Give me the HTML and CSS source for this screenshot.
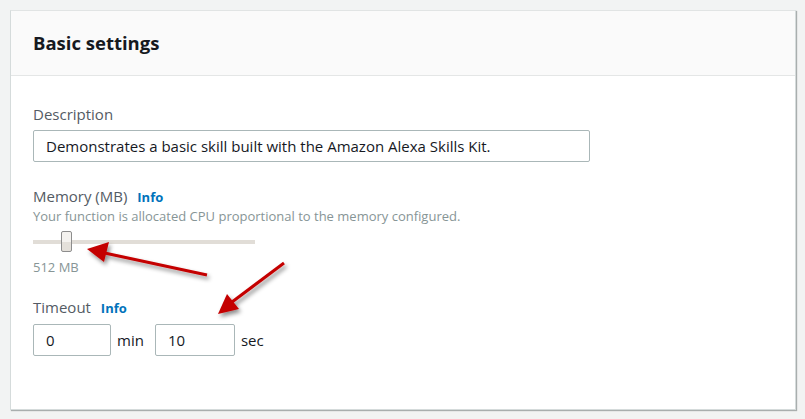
FILE: index.html
```html
<!DOCTYPE html>
<html>
<head>
<meta charset="utf-8">
<link rel="stylesheet" href="styles.css">
</head>
<body>
<div class="card">
  <div class="card-header"><h2>Basic settings</h2></div>
  <div class="card-body">
    <div class="field">
      <div class="label">Description</div>
      <div class="input wide">Demonstrates a basic skill built with the Amazon Alexa Skills Kit.</div>
    </div>
    <div class="field">
      <div class="label">Memory (MB) <a class="info">Info</a></div>
      <div class="hint">Your function is allocated CPU proportional to the memory configured.</div>
      <div class="slider"><div class="track"></div><div class="thumb"></div></div>
      <div class="hint value">512 MB</div>
    </div>
    <div class="field">
      <div class="label">Timeout <a class="info">Info</a></div>
      <div class="timeout">
        <div class="input small">0</div><span class="unit">min</span>
        <div class="input small">10</div><span class="unit">sec</span>
      </div>
    </div>
  </div>
</div>
<svg class="arrows" width="805" height="419" viewBox="0 0 805 419">
  <defs>
    <filter id="sh" x="-20%" y="-20%" width="140%" height="140%">
      <feDropShadow dx="2" dy="3" stdDeviation="2" flood-color="#000" flood-opacity="0.45"/>
    </filter>
  </defs>
  <g filter="url(#sh)" fill="#c40000" stroke="#c40000">
    <line x1="207" y1="275" x2="100" y2="252" stroke-width="3"/>
    <polygon points="87,249 109,242 104,262" stroke="none"/>
    <line x1="284" y1="263" x2="228" y2="305" stroke-width="3"/>
    <polygon points="218,314 227,294 239,309" stroke="none"/>
  </g>
</svg>
</body>
</html>
```
FILE: styles.css
```css
html, body { margin: 0; padding: 0; }
body {
  background: #f2f3f3;
  font-family: "Open Sans", "Noto Sans", sans-serif;
  color: #16191f;
  width: 805px;
  height: 419px;
  position: relative;
  overflow: hidden;
}
.card {
  margin: 10px 0 0 10px;
  width: 786px;
  height: 400px;
  background: #fff;
  border: 1px solid #d5dbdb;
  border-top-color: #e1e4e4;
  box-shadow: 1px 1px 1px 0 #a9aeae;
  box-sizing: border-box;
}
.card-header {
  background: #fafafa;
  border-bottom: 1px solid #e4e6e6;
  height: 65px;
  box-sizing: border-box;
  padding: 20px 0 0 22px;
}
.card-header h2 {
  margin: 0;
  font-size: 18.5px;
  font-weight: 700;
  line-height: 24px;
  color: #16191f;
}
.card-body {
  padding: 28px 22px 0 22px;
}
.field { margin-bottom: 24px; }
.field + .field + .field { margin-top: -2px; }
.label {
  font-size: 15px;
  line-height: 20px;
  color: #545b64;
  margin-bottom: 6px;
}
.info {
  font-size: 13px;
  font-weight: 700;
  color: #0073bb;
  margin-left: 6px;
}
.hint {
  font-size: 13px;
  line-height: 16px;
  color: #879596;
  margin-top: -5px;
}
.input {
  border: 1px solid #aab7b8;
  border-radius: 2px;
  height: 32px;
  box-sizing: border-box;
  font-size: 15px;
  line-height: 30px;
  padding: 0 12px;
  color: #16191f;
}
.input.wide { width: 557px; }
.slider {
  position: relative;
  width: 222px;
  height: 22px;
  margin-top: 7px;
  display: flex;
  align-items: center;
}
.track {
  width: 100%;
  height: 4px;
  background: #e1ddd7;
}
.thumb {
  position: absolute;
  left: 28px;
  top: 0;
  width: 11px;
  height: 21px;
  box-sizing: border-box;
  border: 1px solid #8d8d8d;
  border-radius: 2px;
  background: linear-gradient(#f4f2ef 50%, #e4e0da 50%);
}
.hint.value { margin-top: 6px; }
.timeout {
  display: flex;
  align-items: center;
}
.input.small { width: 78px; }
.timeout .input.small:nth-of-type(2) { width: 80px; }
.unit {
  font-size: 15px;
  color: #16191f;
  margin: 0 11px 0 6px;
}
.arrows {
  position: absolute;
  left: 0;
  top: 0;
  pointer-events: none;
}
```
